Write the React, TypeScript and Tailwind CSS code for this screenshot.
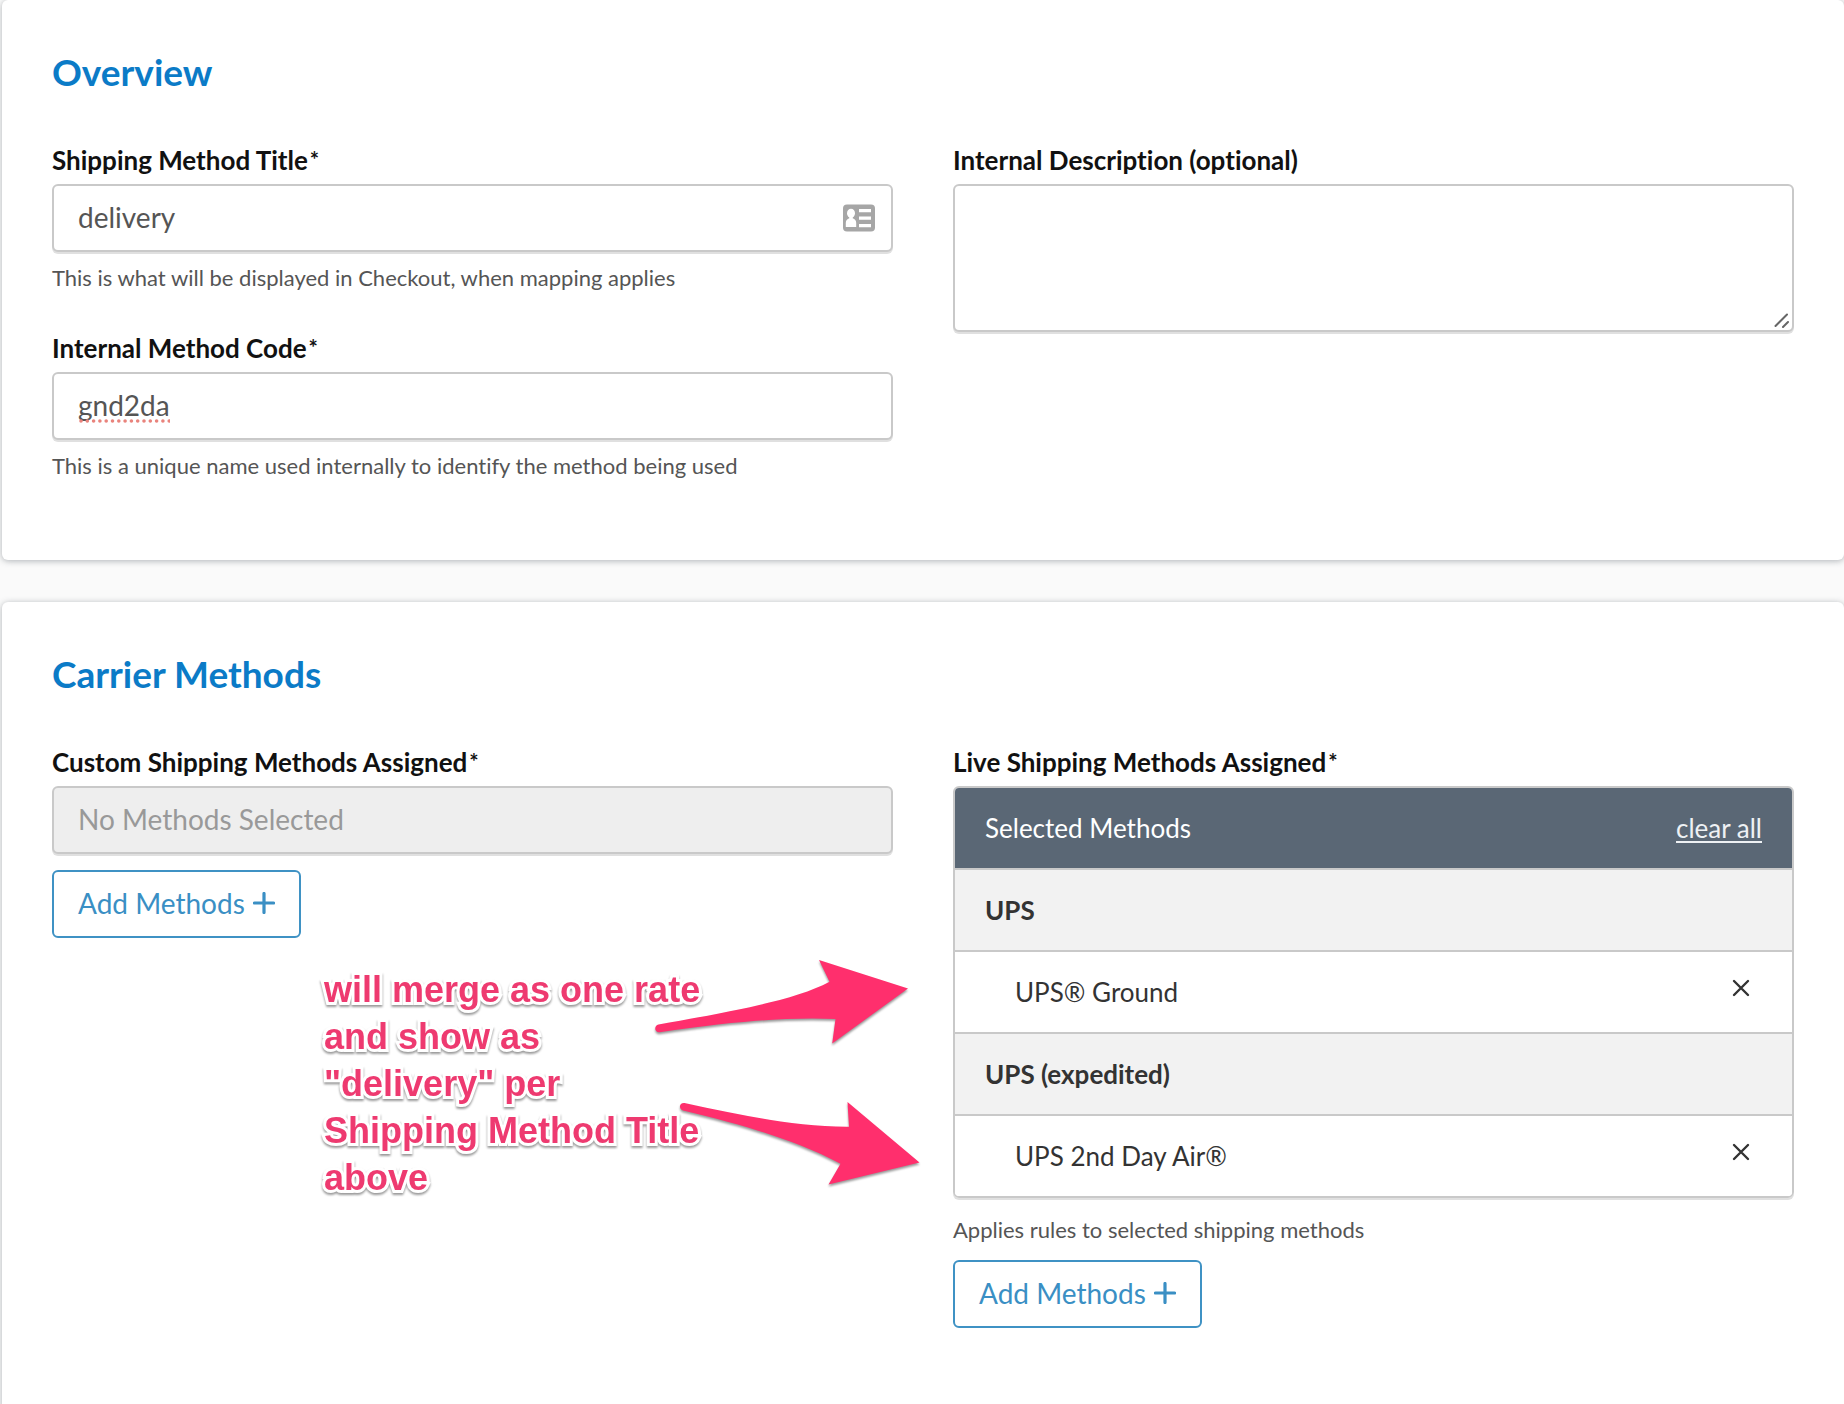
import clsx from "clsx";
import { ReactNode } from "react";

const boxStyles =
  "block w-full rounded-md border-2 border-[#c9c9c9] px-6 text-[28px] text-[#555] shadow-[0_2px_0_#e0e0e0] outline-none";

function Card({ title, children }: { title: string; children: ReactNode }) {
  return (
    <section className="rounded-md bg-white px-[50px] pb-20 pt-[50px] shadow-[0_1px_6px_rgba(60,70,80,0.4)]">
      <h2 className="mb-12 text-[37px] font-bold leading-[44px] text-[#0b7bc7]">
        {title}
      </h2>
      <div className="grid grid-cols-2 gap-[60px]">{children}</div>
    </section>
  );
}

function Label({
  htmlFor,
  id,
  required,
  children,
}: {
  htmlFor?: string;
  id?: string;
  required?: boolean;
  children: ReactNode;
}) {
  return (
    <label
      htmlFor={htmlFor}
      id={id}
      className="mb-1.5 flex text-[26px] font-bold leading-[36px] text-[#111]"
    >
      {children}
      {required && <span className="ml-0.5 text-[22px]">*</span>}
    </label>
  );
}

function HelpText({ children }: { children: ReactNode }) {
  return <p className="text-[22px] leading-[28px] text-[#555]">{children}</p>;
}

function AddMethodsButton() {
  return (
    <button
      type="button"
      className="flex h-[68px] items-center gap-2 rounded-md border-2 border-[#3f92c4] bg-white px-6 pb-0.5 text-[28px] text-[#3a8fc4]"
    >
      Add Methods
      <svg width="22" height="22" viewBox="0 0 22 22" aria-hidden="true">
        <path
          d="M11 1.5v19M1.5 11h19"
          stroke="currentColor"
          strokeWidth="3.2"
          strokeLinecap="round"
        />
      </svg>
    </button>
  );
}

function ContactIcon() {
  return (
    <svg width="32" height="28" viewBox="0 0 32 28" aria-hidden="true">
      <rect width="32" height="27" y="0.5" rx="4" fill="#a6a6a6" />
      <g fill="#fff">
        <ellipse cx="8" cy="9.3" rx="4" ry="4.6" />
        <path d="M6.3 12h3.4v2.3c2.2.8 3.5 2.4 3.5 4.7v4H2.8v-4c0-2.3 1.3-3.9 3.5-4.7z" />
        <path d="M16 5h12v3.200H16zM16 12.500h12v3.200H16zM16 20h12v3.200H16z" />
      </g>
    </svg>
  );
}

// Hand-drawn style note with two arrows pointing at the method rows
function Annotation() {
  return (
    <div className="pointer-events-none absolute left-[272px] top-[222px]">
      <p className="w-[385px] font-['Liberation_Sans',Arial,sans-serif] text-[36px] font-bold leading-[47px] text-[#ee3a70] [-webkit-text-stroke:6px_white] [filter:drop-shadow(0_2px_1px_rgba(0,0,0,0.4))] [paint-order:stroke_fill]">
        will merge as one rate and show as "delivery" per Shipping Method Title
        above
      </p>
      <svg
        className="absolute left-[326px] top-[-10px] overflow-visible [filter:drop-shadow(0_2px_1px_rgba(0,0,0,0.4))]"
        width="270"
        height="230"
        viewBox="650 956 270 230"
        fill="#ff2f6d"
        aria-hidden="true"
      >
        <path d="M908 988.5L819 960l10.5 21.7C797 999 745 1009 658.5 1024.5c-4.5 1-4.5 8 1 7.8C735 1021 790 1017 835.5 1019l-3.3 24.5z" />
        <path d="M919.5 1162.5L847.5 1102l1.5 24.7C797 1127 745 1116 684.5 1103c-5-.5-6.5 5.5-1.500 7.5C745 1125 797 1141 840.5 1163.7L828.5 1184.5z" />
      </svg>
    </div>
  );
}

function MethodRow({ name, group }: { name: string; group?: boolean }) {
  return (
    <li
      className={clsx(
        "flex h-[82px] items-center justify-between border-t-2 border-[#c9c9c9] text-[26px] text-[#333]",
        group ? "bg-[#f2f2f2] pl-[30px] font-bold" : "bg-white pl-[60px]"
      )}
    >
      {name}
      {!group && (
        <button
          type="button"
          aria-label={`Remove ${name}`}
          className="mr-[42px] pb-2"
        >
          <svg width="18" height="18" viewBox="0 0 18 18" aria-hidden="true">
            <path
              d="M2 2l14 14M16 2L2 16"
              stroke="#333"
              strokeWidth="2.4"
              strokeLinecap="round"
            />
          </svg>
        </button>
      )}
    </li>
  );
}

export default function App() {
  return (
    <main className="flex min-h-screen flex-col gap-[42px] overflow-hidden bg-[#fafafa] pl-0.5 font-[Lato,sans-serif] [font-variant-ligatures:none] [&>section:last-child]:grow [&>section:last-child]:rounded-b-none">
      <Card title="Overview">
        <div className="flex flex-col gap-[38px]">
          <div>
            <Label htmlFor="title" required>
              Shipping Method Title
            </Label>
            <div className="relative">
              <input
                id="title"
                defaultValue="delivery"
                className={clsx(boxStyles, "h-[68px] bg-white pb-0.5")}
              />
              <span className="absolute right-[18px] top-5">
                <ContactIcon />
              </span>
            </div>
            <div className="pt-3">
              <HelpText>
                This is what will be displayed in Checkout, when mapping applies
              </HelpText>
            </div>
          </div>
          <div>
            <Label htmlFor="code" required>
              Internal Method Code
            </Label>
            <div className="relative">
              <input
                id="code"
                defaultValue="gnd2da"
                className={clsx(boxStyles, "h-[68px] bg-white pb-0.5")}
              />
              {/* spelling mark */}
              <svg
                className="absolute left-[26px] top-[47px]"
                width="92"
                height="4"
                aria-hidden="true"
              >
                <path
                  d="M3 2H92"
                  stroke="#e9837c"
                  strokeWidth="3.6"
                  strokeLinecap="round"
                  strokeDasharray="0 6.3"
                />
              </svg>
            </div>
            <div className="pt-3">
              <HelpText>
                This is a unique name used internally to identify the method
                being used
              </HelpText>
            </div>
          </div>
        </div>
        <div>
          <Label htmlFor="description">Internal Description (optional)</Label>
          <div className="relative">
            <textarea
              id="description"
              className={clsx(boxStyles, "h-[148px] resize-none bg-white py-4")}
            />
            <svg
              className="absolute bottom-1 right-1"
              width="16"
              height="16"
              viewBox="0 0 16 16"
              aria-hidden="true"
            >
              <path
                d="M1.5 14L13 2.5M9 15l5-5"
                stroke="#666"
                strokeWidth="2"
                strokeLinecap="round"
              />
            </svg>
          </div>
        </div>
      </Card>

      <Card title="Carrier Methods">
        <div className="relative">
          <Label htmlFor="custom-methods" required>
            Custom Shipping Methods Assigned
          </Label>
          <input
            id="custom-methods"
            disabled
            placeholder="No Methods Selected"
            className={clsx(
              boxStyles,
              "mb-4 h-[68px] bg-[#eee] pb-0.5 placeholder:text-[#999]"
            )}
          />
          <AddMethodsButton />
          <Annotation />
        </div>
        <div>
          <Label id="live-methods" required>
            Live Shipping Methods Assigned
          </Label>
          <div
            role="group"
            aria-labelledby="live-methods"
            className="overflow-hidden rounded-md border-2 border-[#c9c9c9] shadow-[0_2px_0_#e0e0e0]"
          >
            <div className="flex h-20 items-center justify-between bg-[#5a6775] px-[30px] text-[26px] text-white">
              Selected Methods
              <a
                href="#"
                className="text-[#eef1f4] underline decoration-2 underline-offset-3"
              >
                clear all
              </a>
            </div>
            <ul>
              <MethodRow name="UPS" group />
              <MethodRow name="UPS® Ground" />
              <MethodRow name="UPS (expedited)" group />
              <MethodRow name="UPS 2nd Day Air®" />
            </ul>
          </div>
          <div className="pb-4 pt-[18px]">
            <HelpText>Applies rules to selected shipping methods</HelpText>
          </div>
          <AddMethodsButton />
        </div>
      </Card>
    </main>
  );
}
